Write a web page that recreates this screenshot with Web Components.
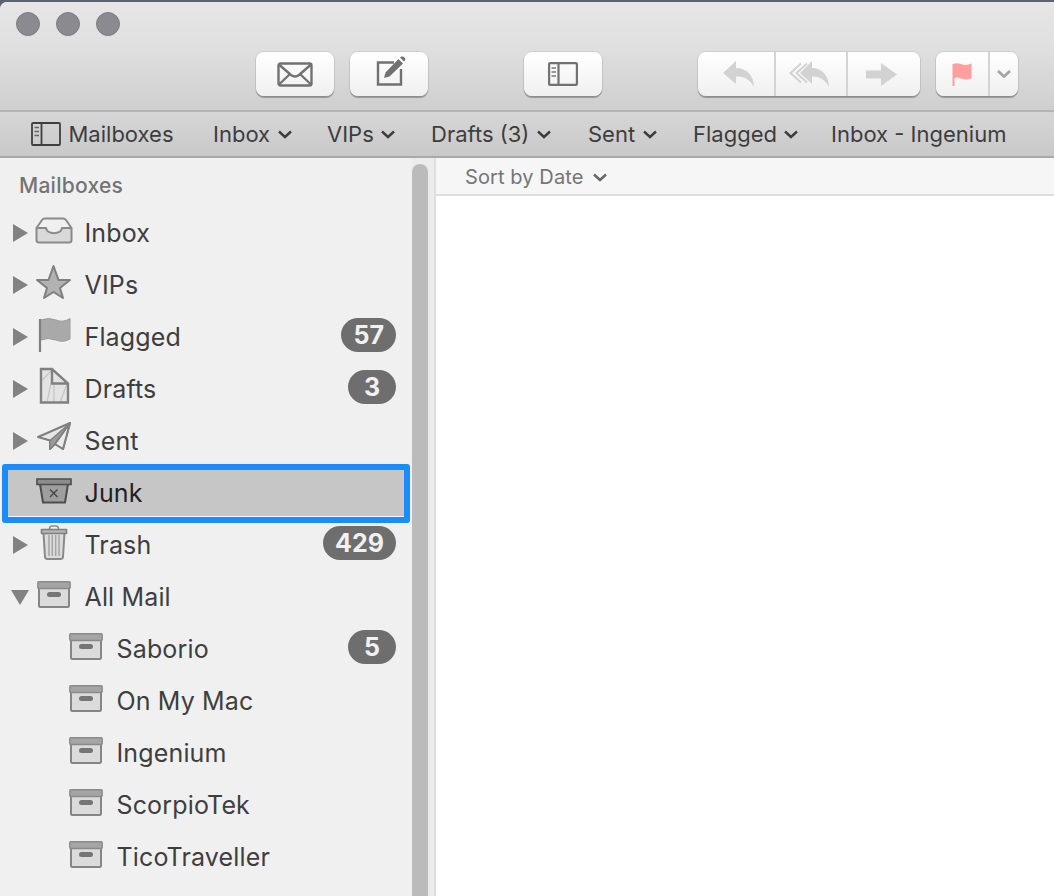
<!DOCTYPE html>
<html>
<head>
<meta charset="utf-8">
<title>Mail</title>
<style>
  html, body { margin: 0; height: 896px; overflow: hidden; background: #5d6272; }
  body { font-family: Inter, Roboto, "Liberation Sans", sans-serif; }
</style>
</head>
<body>
<mail-window>
  <window-titlebar slot="chrome">
    <tool-group>
      <tool-seg width="78">
        <svg width="36" height="25" viewBox="0 0 36 25" fill="none" stroke="#717171" stroke-width="2.4" stroke-linejoin="round"><rect x="1.5" y="1.5" width="33" height="22" rx="2"/><path d="M2.5 3 L14 13 Q18 16 22 13 L33.5 3 M2.5 22 L12.5 12.5 M33.5 22 L23.5 12.5"/></svg>
      </tool-seg>
    </tool-group>
    <tool-group style="margin-left:16px">
      <tool-seg width="78">
        <svg width="30" height="30" viewBox="0 0 30 30" style="margin:-6px 0 0 3px"><path d="M18 6.500H2v22h23V13" fill="none" stroke="#717171" stroke-width="2.400"/><path d="M9.500 16.500 L22.500 3 L27 7.500 L13.500 20.500 L8 22Z M24 1.500 L25.500 0.500 Q27 0 28.500 1.500 Q30 3 29 4.500 L28 5.500Z" fill="#717171"/></svg>
      </tool-seg>
    </tool-group>
    <tool-group style="margin-left:96px">
      <tool-seg width="78">
        <svg width="30" height="24" viewBox="0 0 30 24" fill="none" stroke="#717171" stroke-width="2.200"><rect x="1.100" y="1.100" width="27.800" height="21.800" rx="1"/><path d="M10.500 1v22"/><path d="M3.500 6h4.500M3.500 10h4.500M3.500 14h4.500" stroke-width="1.800" stroke="#999"/></svg>
      </tool-seg>
    </tool-group>
    <tool-group style="margin-left:96px">
      <tool-seg width="76">
        <svg width="31" height="26" viewBox="0 0 31 26" fill="#d2d2d2" style="margin-left:4px"><path d="M13 0 L0 12 L13 23 V15.500 C20 15 27 18 31 26 C31 15 24 7 13 7Z"/></svg>
      </tool-seg>
      <tool-seg width="72">
        <svg width="41" height="26" viewBox="0 0 41 26" style="margin-right:5px"><path d="M13 2.500 L2.500 12 L13 21.500 M19 2.500 L8.500 12 L19 21.500" fill="none" stroke="#d2d2d2" stroke-width="2"/><path d="M24 0 L12 12 L24 23 V15.500 C30 15 37 18 41 26 C41 15 34 7 24 7Z" fill="#d2d2d2"/></svg>
      </tool-seg>
      <tool-seg width="74">
        <svg width="31" height="23" viewBox="0 0 31 23" fill="#d2d2d2" style="margin-right:6px"><path d="M0 7.500 H15 V0 L31 11.500 L15 23 V15.500 H0Z"/></svg>
      </tool-seg>
    </tool-group>
    <tool-group style="margin-left:16px">
      <tool-seg width="52">
        <svg width="20" height="23" viewBox="0 0 20 23" fill="#ff9f9f"><path d="M0.500 1 Q5 -0.500 9 1 Q14 3 19.500 0.500 V15.500 Q14 17.500 9 15.500 Q5 14 2.500 15 V23 H0.500Z"/></svg>
      </tool-seg>
      <tool-seg width="30">
        <svg width="14" height="8" viewBox="0 0 14 8" fill="none" stroke="#a5a5a5" stroke-width="2.800"><path d="M1 1 L7 6.500 L13 1"/></svg>
      </tool-seg>
    </tool-group>
  </window-titlebar>

  <favorites-bar slot="chrome">
    <fav-item>
      <svg slot="icon" width="30" height="24" viewBox="0 0 30 24" fill="none" stroke="#3f3f3f" stroke-width="1.800"><rect x="1" y="1" width="28" height="22" rx="1"/><path d="M10.500 1v22"/><path d="M3.500 5.500h4.500M3.500 9.500h4.500M3.500 13.500h4.500" stroke-width="1.600" stroke="#666"/></svg>
      Mailboxes
    </fav-item>
    <fav-item menu>Inbox</fav-item>
    <fav-item menu>VIPs</fav-item>
    <fav-item menu>Drafts (3)</fav-item>
    <fav-item menu>Sent</fav-item>
    <fav-item menu>Flagged</fav-item>
    <fav-item>Inbox - Ingenium</fav-item>
  </favorites-bar>

  <mailbox-sidebar slot="sidebar" heading="Mailboxes">
    <mailbox-row icon="inbox" disclosure="closed">Inbox</mailbox-row>
    <mailbox-row icon="star" disclosure="closed">VIPs</mailbox-row>
    <mailbox-row icon="flag" disclosure="closed" count="57">Flagged</mailbox-row>
    <mailbox-row icon="draft" disclosure="closed" count="3">Drafts</mailbox-row>
    <mailbox-row icon="sent" disclosure="closed">Sent</mailbox-row>
    <mailbox-row icon="junk" selected>Junk</mailbox-row>
    <mailbox-row icon="trash" disclosure="closed" count="429">Trash</mailbox-row>
    <mailbox-row icon="box" disclosure="open">All Mail</mailbox-row>
    <mailbox-row icon="box" nested count="5">Saborio</mailbox-row>
    <mailbox-row icon="box" nested>On My Mac</mailbox-row>
    <mailbox-row icon="box" nested>Ingenium</mailbox-row>
    <mailbox-row icon="box" nested>ScorpioTek</mailbox-row>
    <mailbox-row icon="box" nested>TicoTraveller</mailbox-row>
  </mailbox-sidebar>

  <message-pane slot="content" sort="Sort by Date"></message-pane>
</mail-window>

<script>
const chevron = (color, w) => `<svg width="14" height="9" viewBox="0 0 14 9" fill="none" stroke="${color}" stroke-width="${w}"><path d="M1 1.500 L7 7 L13 1.500"/></svg>`;

class MailWindow extends HTMLElement {
  constructor() {
    super();
    this.attachShadow({ mode: "open" });
    this.shadowRoot.innerHTML = `
      <style>
        :host {
          display: flex;
          flex-direction: column;
          height: 894px;
          margin-top: 2px;
          border-radius: 7px 0 0 0;
          overflow: hidden;
          background: #f0f0f0;
        }
        .body { flex: 1; display: flex; min-height: 0; }
      </style>
      <slot name="chrome"></slot>
      <div class="body">
        <slot name="sidebar"></slot>
        <slot name="content"></slot>
      </div>
    `;
  }
}

class WindowTitlebar extends HTMLElement {
  constructor() {
    super();
    this.attachShadow({ mode: "open" });
    this.shadowRoot.innerHTML = `
      <style>
        :host {
          display: block;
          height: 110px;
          box-sizing: border-box;
          padding-top: 10px;
          background: linear-gradient(#e6e6e6, #e0e0e0 40%, #cfcfcf);
          border-bottom: 2px solid #b4b4b4;
        }
        .lights { display: flex; gap: 16px; padding-left: 16px; }
        .lights span {
          width: 24px;
          height: 24px;
          box-sizing: border-box;
          border-radius: 50%;
          background: #8b8a90;
          border: 1px solid #7d7c82;
        }
        .tools { display: flex; padding: 16px 0 0 256px; }
      </style>
      <div class="lights"><span></span><span></span><span></span></div>
      <div class="tools"><slot></slot></div>
    `;
  }
}

class ToolGroup extends HTMLElement {
  constructor() {
    super();
    this.attachShadow({ mode: "open" });
    this.shadowRoot.innerHTML = `
      <style>
        :host {
          display: flex;
          height: 44px;
          border-radius: 8px;
          background: linear-gradient(#ffffff, #f0f0f0);
          box-shadow: 0 0 0 1px rgba(0,0,0,.07), 0 1.500px 1px rgba(0,0,0,.28);
        }
      </style>
      <slot></slot>
    `;
  }
}

class ToolSeg extends HTMLElement {
  constructor() {
    super();
    this.attachShadow({ mode: "open" });
    this.shadowRoot.innerHTML = `
      <style>
        :host {
          display: flex;
          align-items: center;
          justify-content: center;
          box-sizing: border-box;
        }
        :host(:not(:first-child)) { border-left: 2px solid #d4d4d4; }
      </style>
      <slot></slot>
    `;
    this.style.width = this.getAttribute("width") + "px";
  }
}

class FavoritesBar extends HTMLElement {
  constructor() {
    super();
    this.attachShadow({ mode: "open" });
    this.shadowRoot.innerHTML = `
      <style>
        :host {
          display: grid;
          grid-template-columns: 182px 114px 104px 157px 105px 138px auto;
          align-items: center;
          height: 46px;
          box-sizing: border-box;
          padding-left: 31px;
          background: linear-gradient(#d6d6d6, #c9c9c9);
          border-bottom: 2px solid #a9a9a9;
          color: #3d3d3d;
          font-size: 22px;
        }
      </style>
      <slot></slot>
    `;
  }
}

class FavItem extends HTMLElement {
  constructor() {
    super();
    this.attachShadow({ mode: "open" });
    this.shadowRoot.innerHTML = `
      <style>
        :host { display: flex; align-items: center; gap: 7.500px; white-space: nowrap; }
        svg { display: block; }
      </style>
      <slot name="icon"></slot><slot></slot>
      ${this.hasAttribute("menu") ? chevron("#3d3d3d", 2.4) : ""}
    `;
  }
}

class MailboxSidebar extends HTMLElement {
  constructor() {
    super();
    this.attachShadow({ mode: "open" });
    this.shadowRoot.innerHTML = `
      <style>
        :host {
          display: flex;
          flex: none;
          width: 436px;
          height: 100%;
          box-sizing: border-box;
          background: #f0f0f0;
          border-right: 2px solid #dfdfdf;
        }
        .list { width: 412px; flex: none; }
        h2 {
          margin: 0;
          height: 49px;
          box-sizing: border-box;
          padding: 15px 0 0 19px;
          font-size: 21px;
          line-height: 26px;
          font-weight: 500;
          letter-spacing: .25px;
          color: #737373;
        }
        .rail { width: 22px; background: #ececec; }
        .thumb {
          width: 16px;
          height: 100%;
          margin-top: 6px;
          background: #bbbbbb;
          border-radius: 8px 8px 0 0;
        }
      </style>
      <div class="list">
        <h2>${this.getAttribute("heading")}</h2>
        <slot></slot>
      </div>
      <div class="rail"><div class="thumb"></div></div>
    `;
  }
}

class MailboxRow extends HTMLElement {
  constructor() {
    super();
    this.attachShadow({ mode: "open" });
    const disclosure = this.getAttribute("disclosure");
    const count = this.getAttribute("count");
    let tri = "";
    if (disclosure === "closed") tri = `<svg width="15" height="18" viewBox="0 0 15 18"><path d="M0 0 L15 9 L0 18Z" fill="#828282"/></svg>`;
    if (disclosure === "open") tri = `<svg width="18" height="15" viewBox="0 0 18 15" style="margin:0 0 0 -2px"><path d="M0 0 H18 L9 15Z" fill="#828282"/></svg>`;
    this.shadowRoot.innerHTML = `
      <style>
        :host {
          display: block;
          position: relative;
          height: 52px;
          color: #3e3e3e;
          font-size: 25px;
          letter-spacing: .15px;
        }
        :host([selected]) { color: #222; }
        :host([selected])::before {
          content: "";
          position: absolute;
          left: 2px;
          right: 2px;
          top: -3px;
          bottom: -4px;
          box-sizing: border-box;
          background: #c6c6c6;
          border: 6px solid #1a8cfb;
          border-radius: 3px;
          box-shadow: inset 0 -1px 0 #f4f4f4;
        }
        .row {
          position: relative;
          display: flex;
          align-items: center;
          height: 100%;
          padding-right: 16px;
        }
        :host([nested]) .row { padding-left: 32px; }
        .tri { width: 13px; margin-left: 13px; flex: none; display: flex; margin-right: 8px; }
        .tri svg { flex: none; display: block; }
        .label { flex: 1; margin-left: 10.500px; white-space: nowrap; }
        count-badge { margin-top: -4px; }
      </style>
      <div class="row">
        <span class="tri">${tri}</span>
        <mailbox-icon name="${this.getAttribute("icon")}"></mailbox-icon>
        <span class="label"><slot></slot></span>
        ${count ? `<count-badge>${count}</count-badge>` : ""}
      </div>
    `;
  }
}

const mailboxIcons = {
  inbox: `<path d="M2.500 15 L8 7 Q9 5.500 11 5.500 H29 Q31 5.500 32 7 L37.500 15" fill="#f0f0f0" stroke="#8a8a8a" stroke-width="2"/>
    <path d="M2.500 15 H12 C13 22 27 22 28 15 H37.500 V27 Q37.500 29.500 35 29.500 H5 Q2.500 29.500 2.500 27Z" fill="#d9d9d9" stroke="#8a8a8a" stroke-width="2" stroke-linejoin="round"/>`,
  star: `<path d="M19.500 1 L14.500 15 H3 L13 23 L10 33 L19.500 27 L29 33 L26 23 L36 15 H24.500Z" fill="#b2b2b2" stroke="#7f7f7f" stroke-width="2" stroke-linejoin="round"/>`,
  flag: `<path d="M6.500 3 Q15 0 22 3 Q29 6 36 1.500 V22 Q29 26 22 23 Q14 20 6.500 23Z" fill="#a9a9a9" stroke="#9a9a9a" stroke-width="1"/><path d="M6 2 V35" stroke="#7f7f7f" stroke-width="2.200"/>`,
  draft: `<path d="M7 0 H18 L34 14.500 V33.500 H7Z" fill="#e3e3e3"/>
    <path d="M7 12.500 L18 1 M13 33.500 L17 14 M20 33.500 V15 M26 33.500 L33 15" fill="none" stroke="#c6c6c6" stroke-width="1.300"/>
    <path d="M7 0 H18 L34 14.500 V33.500 H7Z M18 0 V14.500 H34" fill="none" stroke="#808080" stroke-width="2.400"/>`,
  sent: `<path d="M36 2 L4 16 L16 19.500 V28 L21 23 L29 28Z" fill="#e6e6e6" stroke="#7f7f7f" stroke-width="2" stroke-linejoin="round"/><path d="M16 19.500 L36 2 L21 23 L16 28Z" fill="#9a9a9a" stroke="#7f7f7f" stroke-width="1.200" stroke-linejoin="round"/><path d="M21 23 L36 2 L29 28Z" fill="#ececec" stroke="#7f7f7f" stroke-width="2" stroke-linejoin="round"/>`,
  junk: `<path d="M6 11 L9 29.500 H31 L34 11Z" fill="#9e9e9e" stroke="#4c4c4c" stroke-width="2" stroke-linejoin="round"/><path d="M3 6 H37 V11.500 H3Z" fill="#8c8c8c" stroke="#4c4c4c" stroke-width="1.600"/><path d="M16 16.500 L23.500 24 M23.500 16.500 L16 24" stroke="#444" stroke-width="1.300"/>`,
  trash: `<path d="M9.500 8 L11 32 Q11.200 34 13.500 34 H26.500 Q28.800 34 29 32 L30.500 8Z" fill="#dcdcdc" stroke="#8a8a8a" stroke-width="2"/><path d="M15 10 V31 M18.300 10 V31 M21.700 10 V31 M25 10 V31" stroke="#a4a4a4" stroke-width="1.500"/><path d="M7.500 4.500 H32.500 V8.500 H7.500Z" fill="#b5b5b5" stroke="#7f7f7f" stroke-width="1.600" stroke-linejoin="round"/><path d="M15.500 4 Q15.500 1 18 1 H22 Q24.500 1 24.500 4" fill="none" stroke="#8a8a8a" stroke-width="1.500"/>`,
  box: `<path d="M5 11 H35 V28.500 Q35 30 33.500 30 H6.500 Q5 30 5 28.500Z" fill="#dbdbdb" stroke="#858585" stroke-width="2"/><rect x="3.800" y="4.800" width="32.400" height="6.700" rx="1" fill="#a5a5a5" stroke="#8a8a8a" stroke-width="1.400"/><rect x="13" y="15" width="14" height="5" rx="2.500" fill="#757575"/>`
};

class MailboxIcon extends HTMLElement {
  constructor() {
    super();
    this.attachShadow({ mode: "open" });
    this.shadowRoot.innerHTML = `
      <style>
        :host { display: block; flex: none; width: 40px; height: 40px; }
        svg { display: block; overflow: visible; }
      </style>
      <svg width="40" height="40" viewBox="0 0 40 40">${mailboxIcons[this.getAttribute("name")]}</svg>
    `;
  }
}

class CountBadge extends HTMLElement {
  constructor() {
    super();
    this.attachShadow({ mode: "open" });
    this.shadowRoot.innerHTML = `
      <style>
        :host {
          display: block;
          min-width: 24px;
          height: 34px;
          padding: 0 12px;
          box-sizing: content-box;
          border-radius: 17px;
          background: #6e6e6e;
          color: #f1f1f1;
          font-size: 25px;
          font-weight: 700;
          letter-spacing: 0;
          line-height: 34px;
          text-align: center;
        }
      </style>
      <slot></slot>
    `;
  }
}

class MessagePane extends HTMLElement {
  constructor() {
    super();
    this.attachShadow({ mode: "open" });
    this.shadowRoot.innerHTML = `
      <style>
        :host { display: block; flex: 1; background: #fff; }
        .sort {
          display: flex;
          align-items: center;
          gap: 10px;
          height: 38px;
          box-sizing: border-box;
          padding: 2px 0 0 29px;
          background: #f6f6f6;
          border-bottom: 2px solid #dedede;
          color: #757575;
          font-size: 20px;
          letter-spacing: .1px;
        }
      </style>
      <div class="sort">${this.getAttribute("sort")} ${chevron("#666", 2.4)}</div>
    `;
  }
}

customElements.define("mail-window", MailWindow);
customElements.define("window-titlebar", WindowTitlebar);
customElements.define("tool-group", ToolGroup);
customElements.define("tool-seg", ToolSeg);
customElements.define("favorites-bar", FavoritesBar);
customElements.define("fav-item", FavItem);
customElements.define("mailbox-sidebar", MailboxSidebar);
customElements.define("mailbox-icon", MailboxIcon);
customElements.define("count-badge", CountBadge);
customElements.define("mailbox-row", MailboxRow);
customElements.define("message-pane", MessagePane);
</script>
</body>
</html>
